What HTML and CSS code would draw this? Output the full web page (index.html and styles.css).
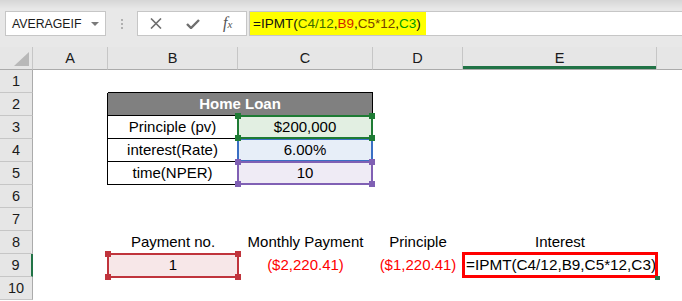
FILE: index.html
```html
<!DOCTYPE html>
<html><head><title>IPMT - Home Loan</title><meta charset="utf-8"><link rel="stylesheet" href="styles.css"></head>
<body>
<div class="fbar">
  <div class="namebox"><span>AVERAGEIF</span><span class="caret"></span></div>
  <div class="grip"><i></i><i></i><i></i></div>
  <div class="btns">
    <svg class="ico-x" width="12" height="11" viewBox="0 0 12 11"><path d="M1 0.5L11 10.5M11 0.5L1 10.5" stroke="#6e6e6e" stroke-width="1.6" fill="none"/></svg>
    <svg class="ico-ok" width="14" height="10" viewBox="0 0 14 10"><path d="M1 5L5 9L13 1" stroke="#6e6e6e" stroke-width="2.4" fill="none"/></svg>
    <span class="fx">f<small>x</small></span>
  </div>
  <div class="input"><span class="hl">=IPMT(<span class="r-c4">C4/12</span>,<span class="r-b9">B9</span>,<span class="r-c5">C5*12</span>,<span class="r-c3">C3</span>)</span></div>
</div>

<div class="sheet">
  <div class="row">
    <div class="corner"><i></i></div>
    <div class="hd">A</div><div class="hd">B</div><div class="hd">C</div><div class="hd">D</div><div class="hd act">E</div><div class="hd last"></div>
  </div>
  <div class="row">
    <div class="rh">1</div><div></div><div class="tt"></div><div class="tt"></div><div></div><div></div><div></div>
  </div>
  <div class="row">
    <div class="rh">2</div><div class="tl"></div><div class="th">Home Loan</div><div></div><div></div><div></div>
  </div>
  <div class="row">
    <div class="rh">3</div><div class="tl"></div><div class="tb">Principle (pv)</div>
    <div class="tb fill-green">$200,000<span class="ref green"><i class="tl-sq"></i><i class="tr-sq"></i><i class="bl-sq"></i><i class="br-sq"></i></span></div>
    <div></div><div></div><div></div>
  </div>
  <div class="row">
    <div class="rh">4</div><div class="tl"></div><div class="tb">interest(Rate)</div>
    <div class="tb fill-blue">6.00%<span class="ref blue"></span></div>
    <div></div><div></div><div></div>
  </div>
  <div class="row">
    <div class="rh">5</div><div class="tl"></div><div class="tb">time(NPER)</div>
    <div class="tb fill-purple">10<span class="ref purple"><i class="tl-sq"></i><i class="tr-sq"></i><i class="bl-sq"></i><i class="br-sq"></i></span></div>
    <div></div><div></div><div></div>
  </div>
  <div class="row">
    <div class="rh">6</div><div></div><div></div><div></div><div></div><div></div><div></div>
  </div>
  <div class="row">
    <div class="rh">7</div><div></div><div></div><div></div><div></div><div></div><div></div>
  </div>
  <div class="row">
    <div class="rh">8</div><div></div><div>Payment no.</div><div>Monthly Payment</div><div>Principle</div><div>Interest</div><div></div>
  </div>
  <div class="row">
    <div class="rh act">9</div><div></div>
    <div class="fill-pink">1<span class="ref red"><i class="tl-sq"></i><i class="tr-sq"></i><i class="bl-sq"></i><i class="br-sq"></i></span></div>
    <div class="neg">($2,220.41)</div>
    <div class="neg">($1,220.41)</div>
    <div class="edit">=IPMT(C4/12,B9,C5*12,C3)<span class="mark"></span><span class="handle"></span></div>
    <div></div>
  </div>
  <div class="row">
    <div class="rh">10</div><div></div><div></div><div></div><div></div><div></div><div></div>
  </div>
</div>
</body></html>
```

FILE: styles.css
```css
body {margin:0;width:682px;height:301px;overflow:hidden;background:#fff;font-family:"Liberation Sans",Arial,sans-serif;color:#000}

/* formula bar */
.fbar {height:47px;box-sizing:border-box;padding-top:11px;display:flex;align-items:flex-start;background:linear-gradient(#d6d6d6,#e8e8e8 9px,#e8e8e8)}
.namebox {margin-left:5px;width:101px;height:25px;box-sizing:border-box;border:1px solid #c6c6c6;background:#fff;display:flex;align-items:center;padding-left:6px;font-size:12.3px;color:#1a1a1a}
.caret {margin-left:auto;margin-right:6px;border-left:4px solid transparent;border-right:4px solid transparent;border-top:4px solid #7a7a7a}
.grip {width:31px;display:flex;flex-direction:column;align-items:center;gap:2px;padding-top:8px}
.grip i {width:2px;height:2px;background:#b0b0b0}
.btns {width:110px;height:25px;box-sizing:border-box;border:1px solid #c6c6c6;background:#fff;display:flex;align-items:center}
.ico-x {margin-left:12px}
.ico-ok {margin-left:24px}
.fx {margin-left:23px;font-family:"Liberation Serif",serif;font-style:italic;font-size:16px;color:#555;line-height:16px}
.fx small {font-size:11px}
.input {flex:1;height:25px;margin-left:2px;box-sizing:border-box;border:1px solid #c6c6c6;border-right:0;background:#fff}
.hl {display:inline-block;height:23px;line-height:23px;padding:0 5px 0 3px;background:#ffff00;font-size:13.5px;color:#111}
.r-c4 {color:#3f6a00}
.r-b9 {color:#d21e00}
.r-c5 {color:#744000}
.r-c3 {color:#009a00}

/* grid */
.sheet {display:grid;grid-template-columns:33px 75px 130px 135px 90px 194px 25px;grid-auto-rows:23px}
.row {display:contents}
.row > div {box-sizing:border-box;position:relative;font-size:15px;line-height:22px;text-align:center;white-space:nowrap}
.corner {background:#e6e6e6;border-right:1px solid #c6c6c6;border-bottom:1px solid #ababab;display:flex;justify-content:flex-end;align-items:flex-end;padding:0 3px 3px 0}
.corner i {width:0;height:0;border-left:15px solid transparent;border-bottom:14px solid #b8b8b8}
.row > .hd {background:#e6e6e6;border-right:1px solid #c6c6c6;border-bottom:1px solid #ababab;font-size:14.5px;color:#1a1a1a}
.row > .hd.act {box-shadow:inset 0 -3px #217346}
.row > .hd.last {border-right:0}
.row > .rh {background:#e6e6e6;border-right:1px solid #ababab;border-bottom:1px solid #c6c6c6;font-size:14.5px;color:#1a1a1a}
.row > .rh.act {border-right:2px solid #217346}

/* Home Loan table */
.row > .tt {border-bottom:1px solid #000}
.row > .tl {border-right:1px solid #000}
.row > .th {grid-column:span 2;background:#808080;color:#fff;font-weight:bold;border-right:1px solid #000;border-bottom:1px solid #000}
.row > .tb {border-right:1px solid #000;border-bottom:1px solid #000}
.fill-green {background:#e2efe2}
.fill-blue {background:#e7eef8}
.fill-purple {background:#efebf5}
.fill-pink {background:#f7e7e8}
.row > .neg {color:#ff0000}
.row > .edit {text-align:left;padding-left:3px;font-size:15.3px}

/* reference highlights */
.ref {position:absolute;top:-1px;left:-1px;right:-1px;bottom:-1px;border:2px solid;z-index:2}
.ref i {position:absolute;width:6px;height:6px;background:currentColor}
.ref .tl-sq {top:-4px;left:-4px}
.ref .tr-sq {top:-4px;right:-4px}
.ref .bl-sq {bottom:-4px;left:-4px}
.ref .br-sq {bottom:-4px;right:-4px}
.green {color:#1e7b34;border-color:#1e7b34}
.blue {color:#3a6fc4;border-color:#3a6fc4;z-index:1}
.purple {color:#8060b4;border-color:#8060b4}
.red {color:#c0343c;border-color:#c0343c}
.mark {position:absolute;top:-2px;left:-1px;right:-1px;bottom:-1px;border:3px solid #ff0000;z-index:3}
.handle {position:absolute;right:-3px;bottom:-3px;width:5px;height:4px;background:#217346;z-index:3}
```
